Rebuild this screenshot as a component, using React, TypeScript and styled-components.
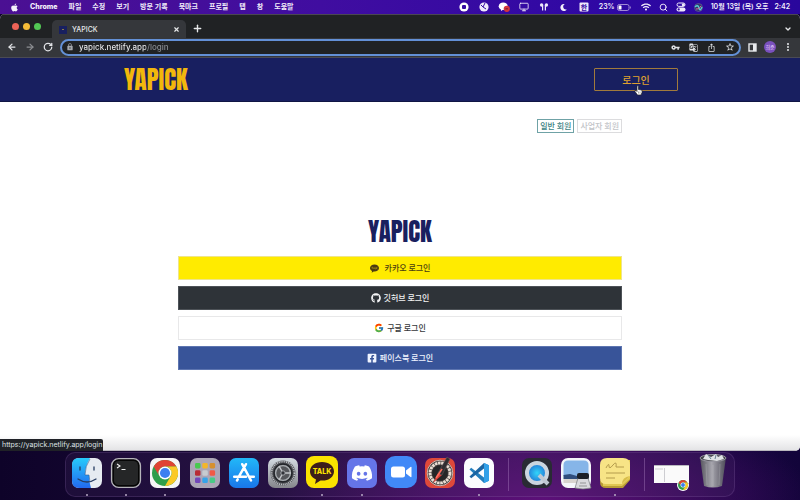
import React from "react";
import styled, { createGlobalStyle } from "styled-components";
import { FaApple, FaDiscord, FaFacebookSquare, FaGithub, FaWifi, FaMoon } from "react-icons/fa";
import { FcGoogle } from "react-icons/fc";
import { MdGTranslate, MdIosShare, MdLock, MdStarBorder, MdVpnKey } from "react-icons/md";
import { ArrowLeft, ArrowRight, ChevronDown, Monitor, MoreVertical, Plus, RotateCw, Search, X } from "lucide-react";

const uiFont = `Inter, "Noto Sans CJK KR", sans-serif`;
const pageFont = `"Noto Sans CJK KR", "Noto Sans", sans-serif`;

const GlobalStyle = createGlobalStyle`
  *, *::before, *::after { box-sizing: border-box; }
  body { margin: 0; font-family: ${uiFont}; }
  button, input, a { font: inherit; color: inherit; }
  button { padding: 0; border: 0; background: none; cursor: pointer; }
  a { text-decoration: none; }
  svg { display: block; flex: none; }
`;

const Desktop = styled.div`
  min-height: 100vh;
  display: flex;
  flex-direction: column;
  background:
    radial-gradient(ellipse 34% 90px at 68% 100%, #5c1078 0%, rgba(92, 16, 120, 0) 100%),
    linear-gradient(90deg, #0e0329 0%, #1c0a38 35%, #330c55 65%, #1a0742 90%, #12043a 100%);
`;

/* System menu bar */

const MenuBar = styled.header`
  height: 14px;
  padding: 0 10px;
  display: flex;
  align-items: center;
  justify-content: space-between;
  background: linear-gradient(90deg, #4b1093 0%, #400da0 40%, #2f08a4 75%, #29079c 100%);
  color: #f3effb;
  font-size: 7px;
  line-height: 14px;
  font-weight: 600;
  white-space: nowrap;
`;

const Menus = styled.nav`
  display: flex;
  align-items: center;
  gap: 11px;
`;

const MenuItem = styled.button<{ $bold?: boolean }>`
  font-weight: ${(p) => (p.$bold ? 800 : 600)};
`;

const StatusIcons = styled.div<{ $gap: number }>`
  display: flex;
  align-items: center;
  gap: ${(p) => p.$gap}px;
`;

const Battery = styled.span`
  display: flex;
  align-items: center;
  gap: 2px;
`;

const Clock = styled.time`
  display: flex;
  gap: 6px;
`;

/* Browser window */

const BrowserWindow = styled.section`
  position: relative;
  flex: 1;
  display: flex;
  flex-direction: column;
  border-radius: 5px 5px 5px 0;
  overflow: hidden;
  background: #fff;
`;

const TabStrip = styled.div`
  height: 24px;
  padding: 5px 8px 0 12px;
  display: flex;
  align-items: flex-start;
  background: #202224;
  border-top: 1px solid #4b4752;
  color: #e6e8ea;
`;

const TrafficLights = styled.div`
  display: flex;
  gap: 4px;
  padding-top: 3px;
  margin-right: 11px;
`;

const Light = styled.button<{ $color: string }>`
  width: 7px;
  height: 7px;
  border-radius: 50%;
  background: ${(p) => p.$color};
`;

const Tab = styled.div`
  width: 134px;
  height: 19px;
  padding: 0 6px 0 7px;
  display: flex;
  align-items: center;
  gap: 5px;
  border-radius: 5px 5px 0 0;
  background: #35373b;
  font-size: 7px;
  font-weight: 500;
`;

const Favicon = styled.span`
  width: 8px;
  height: 8px;
  display: grid;
  place-items: center;
  background: #18205f;

  &::after {
    content: "";
    width: 2px;
    height: 1px;
    background: #8a7a45;
  }
`;

const TabTitle = styled.span`
  flex: 1;
`;

const NewTab = styled.button`
  margin: 3px auto 0 6px;
`;

const TabMenu = styled.button`
  margin-top: 5px;
`;

const Toolbar = styled.div`
  height: 20px;
  padding: 1px 7px 2px;
  display: flex;
  align-items: center;
  gap: 7px;
  background: #35373b;
  border-bottom: 1px solid #4a4b55;
  color: #e2e4e7;
`;

const Navigation = styled.nav`
  display: flex;
  gap: 8px;
`;

const ToolButton = styled.button<{ $dim?: boolean }>`
  opacity: ${(p) => (p.$dim ? 0.5 : 1)};
`;

const AddressBar = styled.label`
  flex: 1;
  height: 17px;
  padding: 0 4px;
  display: flex;
  align-items: center;
  gap: 5px;
  border: 2px solid #6390d6;
  border-radius: 9px;
  background: #202224;
`;

const AddressInput = styled.input`
  flex: 1;
  min-width: 0;
  height: 13px;
  padding: 0;
  border: 0;
  outline: 0;
  font-size: 8px;
  font-weight: 500;
  color: transparent;
  background: linear-gradient(90deg, #f0f1f3 0 67px, #8b8f94 67px);
  background-clip: text;
  -webkit-background-clip: text;
`;

const AddressActions = styled.span`
  display: flex;
  align-items: center;
  gap: 9px;
`;

const Avatar = styled.button`
  width: 12px;
  height: 12px;
  border-radius: 50%;
  background: #7a50bd;
  color: #eadcff;
  font-size: 5px;
  line-height: 12px;
`;

/* Web page */

const SiteHeader = styled.header`
  height: 44px;
  display: flex;
  justify-content: center;
  background: #181f60;
  border-bottom: 1px solid #101544;
`;

const HeaderInner = styled.div`
  width: 70%;
  padding: 0 2px 0 4px;
  display: flex;
  align-items: center;
  justify-content: space-between;
`;

const Wordmark = styled.h1<{ $color: string }>`
  margin: 0;
  color: ${(p) => p.$color};
  font-family: Anton, Impact, "Liberation Sans Narrow", "Liberation Sans", sans-serif;
  font-size: 25px;
  line-height: 30px;
  font-weight: 400;
`;

const LoginLink = styled.a`
  position: relative;
  width: 84px;
  height: 23px;
  border: 1px solid #a17a3c;
  border-radius: 1px;
  color: #dfa02f;
  font-family: ${pageFont};
  font-size: 10px;
  line-height: 22px;
  font-weight: 500;
  text-align: center;
`;

const Pointer = styled.svg`
  position: absolute;
  left: 39px;
  top: 16px;
`;

const Main = styled.main`
  width: 56%;
  align-self: center;
  flex: 1;
  padding: 17px 2px 50px;
  display: flex;
  flex-direction: column;
  font-family: ${pageFont};
`;

const MemberTypes = styled.div`
  display: flex;
  justify-content: flex-end;
  gap: 3px;
`;

const MemberType = styled.button<{ $active?: boolean }>`
  height: 14px;
  padding: 0 2px;
  border: 1px solid ${(p) => (p.$active ? "#6fa2a6" : "#dcdcde")};
  color: ${(p) => (p.$active ? "#3a7f82" : "#c2c4c8")};
  font-size: 8px;
  line-height: 12px;
  font-weight: 500;
`;

const LoginPanel = styled.section`
  padding-top: 84px;
  display: flex;
  flex-direction: column;
  align-items: stretch;
  text-align: center;
`;

const ProviderList = styled.div`
  padding-top: 9px;
  display: grid;
  gap: 6px;
`;

const Provider = styled.button<{ $bg: string; $fg: string; $line: string; $gap?: number }>`
  height: 24px;
  display: flex;
  align-items: center;
  justify-content: center;
  gap: ${(p) => p.$gap ?? 3}px;
  background: ${(p) => p.$bg};
  border: 1px solid ${(p) => p.$line};
  color: ${(p) => p.$fg};
  font-size: 8px;
  line-height: 20px;
  font-weight: 500;
`;

const StatusBubble = styled.div`
  position: absolute;
  left: 0;
  bottom: 0;
  height: 12px;
  padding: 0 1px 0 2px;
  border-radius: 0 2px 0 0;
  background: #202227;
  color: #dfe1e5;
  font-size: 7px;
  line-height: 12px;
`;

const PageShade = styled.div`
  height: 16px;
  background: linear-gradient(#fff, #e4e4e6);
  border-bottom: 1px solid #b9b7bd;
`;

/* Dock */

const DockArea = styled.footer`
  height: 49px;
  padding: 1px 65px 3px;
`;

const Dock = styled.div`
  height: 45px;
  padding: 0 6px;
  display: flex;
  align-items: center;
  justify-content: space-between;
  border: 1px solid rgba(160, 120, 190, 0.2);
  border-radius: 10px;
  background: rgba(80, 50, 110, 0.2);
`;

const DockItem = styled.button<{ $wide?: boolean; $running?: boolean }>`
  width: ${(p) => (p.$wide ? 35 : 30)}px;
  height: 43px;
  display: flex;
  flex-direction: column;
  align-items: center;
  justify-content: flex-end;
  gap: 6px;

  &::after {
    content: "";
    width: 2px;
    height: 2px;
    border-radius: 50%;
    background: ${(p) => (p.$running ? "#b7a9c4" : "transparent")};
  }
`;

const DockRule = styled.span<{ $tight?: boolean }>`
  width: 1px;
  height: 33px;
  margin: 0 ${(p) => (p.$tight ? 0 : 4)}px 0 4px;
  background: rgba(190, 150, 210, 0.35);
`;

const Icon = ({ children, w = 30, h = 30 }: { children: React.ReactNode; w?: number; h?: number }) => (
  <svg width={w} height={h} viewBox={`0 0 ${w} ${h}`} overflow="visible">
    {children}
  </svg>
);

const ChromeMark = ({ r }: { r: number }) => (
  <svg x={15 - r} y={15 - r} width={r * 2} height={r * 2} viewBox="0 0 48 48">
    <circle cx="24" cy="24" r="24" fill="#2f9e4b" />
    <path d="M3.2 12A24 24 0 0 1 44.8 12H24A12 12 0 0 0 13.6 30Z" fill="#df4334" />
    <path d="M44.8 12A24 24 0 0 1 24 48L34.4 30A12 12 0 0 0 24 12Z" fill="#fbc928" />
    <circle cx="24" cy="24" r="12" fill="#fff" />
    <circle cx="24" cy="24" r="9.3" fill="#3d7ff0" />
  </svg>
);

const Finder = () => (
  <Icon>
    <defs>
      <linearGradient id="finderBlue" x1="0" y1="0" x2="0" y2="1">
        <stop stopColor="#27cbfb" /><stop offset="1" stopColor="#2269ef" />
      </linearGradient>
    </defs>
    <rect width="30" height="30" rx="7" fill="#e6ebf1" />
    <path d="M7 0H18Q13 8 13 17H17Q17 24 19 30H7Q0 30 0 23V7Q0 0 7 0Z" fill="url(#finderBlue)" />
    <path d="M8 9V12M22 9V12M6 21Q15 27 24 21" fill="none" stroke="#273c61" strokeWidth="1.3" strokeLinecap="round" />
    <path d="M18 1Q13 8 13 17H17L18 24" fill="none" stroke="#315a91" strokeWidth=".6" />
  </Icon>
);

const Terminal = () => (
  <Icon>
    <rect x=".6" y=".6" width="28.8" height="28.8" rx="7" fill="#050505" stroke="#b6b5bb" strokeWidth="1.4" />
    <rect x="3" y="3" width="24" height="24" rx="4.5" fill="#252627" />
    <path d="M6 6L9 8L6 10M10.5 11.5H14.5" fill="none" stroke="#f1f1f1" strokeWidth="1.1" />
  </Icon>
);

const Chrome = () => (
  <Icon>
    <rect width="30" height="30" rx="7" fill="#f6f5f6" />
    <ChromeMark r={13} />
  </Icon>
);

const Launchpad = () => (
  <Icon>
    <rect width="30" height="30" rx="7" fill="#aca6b6" />
    {["#47c94f", "#f3b62b", "#d6902e", "#b82b34", "#c7cbd0", "#f15945", "#7247b9", "#36a4e9", "#49c986"].map((c, i) => (
      <rect key={c} x={5 + (i % 3) * 7.3} y={5 + Math.floor(i / 3) * 7.3} width="5.5" height="5.5" rx="1.4" fill={c} />
    ))}
  </Icon>
);

const AppStore = () => (
  <Icon>
    <defs>
      <linearGradient id="storeBlue" x1="0" y1="0" x2="0" y2="1">
        <stop stopColor="#22b8f8" /><stop offset="1" stopColor="#1976ea" />
      </linearGradient>
    </defs>
    <rect width="30" height="30" rx="7" fill="url(#storeBlue)" />
    <path d="M13.2 6.2L22 22.5M17 6.2L10 18.3M5.2 18.7H17M20.5 18.7H24.8M8.7 21.3L8 22.5" stroke="#fff" strokeWidth="2.5" strokeLinecap="round" />
  </Icon>
);

const Settings = () => (
  <Icon>
    <defs>
      <linearGradient id="steel" x1="0" y1="0" x2="0" y2="1">
        <stop stopColor="#d4dce2" /><stop offset="1" stopColor="#85868b" />
      </linearGradient>
    </defs>
    <rect width="30" height="30" rx="7" fill="url(#steel)" />
    <circle cx="15" cy="15" r="12.5" fill="#4a4b50" />
    <circle cx="15" cy="15" r="11.5" fill="none" stroke="#bcc0c4" strokeWidth="1.8" strokeDasharray="1.1 .8" />
    <circle cx="15" cy="15" r="9" fill="#55575b" stroke="#222529" strokeWidth="1.4" />
    <circle cx="15" cy="15" r="7.4" fill="none" stroke="#aaaeb2" strokeWidth="1.3" />
    <path d="M15 15H23M15 15L11 8M15 15L11 22" stroke="#c4c7ca" strokeWidth="1.5" />
    <circle cx="15" cy="15" r="2.2" fill="#303238" stroke="#a5a8ac" />
  </Icon>
);

const Talk = () => (
  <Icon w={32} h={32}>
    <rect width="32" height="32" rx="8" fill="#fbe200" />
    <path d="M16 6C9 6 4 10 4 15.4C4 19 6.5 21.8 10 23.4L9 28L14.5 24.5C22 25.3 28 21 28 15.4C28 10 23 6 16 6Z" fill="#3c1d1b" />
    <text x="16" y="18.4" fontSize="7" fontWeight="800" textAnchor="middle" fill="#fbe200" fontFamily="Inter, sans-serif">TALK</text>
  </Icon>
);

const Discord = () => (
  <Icon>
    <rect width="30" height="30" rx="7" fill="#6575e8" />
    <FaDiscord x="4" y="4" width="22" height="22" size={22} color="#fff" />
  </Icon>
);

const Zoom = () => (
  <Icon w={32} h={32}>
    <rect width="32" height="32" rx="10" fill="#4189f7" />
    <rect x="6" y="10.5" width="14" height="11" rx="2.5" fill="#fff" />
    <path d="M21 14.5L25.5 11Q26.5 10.5 26.5 11.5V20.5Q26.5 21.5 25.5 21L21 17.5Z" fill="#fff" />
  </Icon>
);

const DiskTool = () => (
  <Icon>
    <rect width="30" height="30" rx="7" fill="#de493a" />
    <circle cx="15" cy="15" r="12.8" fill="#3b3535" stroke="#c8b9b2" />
    <circle cx="15" cy="15" r="10" fill="none" stroke="#e9ded3" strokeWidth="3" strokeDasharray="2.6 .6" />
    <circle cx="15" cy="15" r="7.6" fill="#252627" />
    <path d="M8 25L13 15L17 17Z" fill="#d93f38" />
    <path d="M13 15L22 -1L25 1L17 17Z" fill="#302e31" stroke="#6c6568" strokeWidth=".5" />
    <path d="M11 20L17 11" stroke="#ff6e5e" strokeWidth="1.6" />
  </Icon>
);

const Code = () => (
  <Icon>
    <rect width="30" height="30" rx="7" fill="#fbfcfe" />
    <path d="M20 5L25 7.2V22.8L20 25L5.5 11.5L7.2 9.8L20 19.6Z" fill="#237ebd" />
    <path d="M20 5V10.4L7.2 20.2L5.5 18.5Z" fill="#1b65a3" />
    <path d="M20 5L25 7.2V22.8L20 25Z" fill="#31a0e8" />
  </Icon>
);

const QuickTime = () => (
  <Icon>
    <defs>
      <radialGradient id="lens"><stop stopColor="#31d5fa" /><stop offset="1" stopColor="#2374d3" /></radialGradient>
    </defs>
    <rect width="30" height="30" rx="7" fill="#292b34" />
    <circle cx="15" cy="15" r="10" fill="url(#lens)" stroke="#cbd5df" strokeWidth="4" />
    <path d="M17 17L26 26" stroke="#c0c9d3" strokeWidth="4" />
  </Icon>
);

const Preview = () => (
  <Icon>
    <rect width="30" height="30" rx="7" fill="#f4f6fa" />
    <path d="M2.5 7Q2.5 2.5 7 2.5H23Q27.5 2.5 27.5 7V18H2.5Z" fill="#86b5e8" />
    <path d="M2.5 17L9 16L16 18H27.5V21H2.5Z" fill="#304d7c" />
    <path d="M2.5 21H27.5V25H2.5Z" fill="#d8d4cf" />
    <path d="M17 20H27L30 30Q22 32 14 30Z" fill="#d9dadd" stroke="#74777c" strokeWidth=".7" />
    <rect x="16" y="15" width="12" height="6" rx="2" fill="#1c2027" />
    <path d="M19 25H25M18 28H26" stroke="#777" strokeWidth=".7" />
  </Icon>
);

const Notes = () => (
  <Icon>
    <path d="M5 4H30V22L23 30H6Q0 30 0 24Z" fill="#b99c35" />
    <path d="M3 2H30V21L22 28H3Z" fill="#e0c752" />
    <path d="M7 0H23Q30 0 30 7V18L22 26H6Q0 26 0 20V7Q0 0 7 0Z" fill="#f7e486" />
    <path d="M22 26Q22 19 30 18Z" fill="#d8bd49" />
    <path d="M6 10Q9 4 9 8T13 7T16 9L24 9M6 15H25M6 20H15" stroke="#b49c4d" fill="none" />
  </Icon>
);

const Thumbnail = () => (
  <Icon w={35} h={30}>
    <rect y="7" width="35" height="18" fill="#fafafa" />
    <rect y="7" width="35" height="1" fill="#babac0" />
    <path d="M10.5 10V24M1 11H9" stroke="#cdcdd1" />
    <g transform="translate(14 12)">
      <circle cx="15" cy="15" r="6" fill="#fff" />
      <ChromeMark r={5} />
    </g>
  </Icon>
);

const Trash = () => (
  <Icon h={34}>
    <defs>
      <linearGradient id="can"><stop stopColor="#55545d" /><stop offset=".45" stopColor="#a6a5ad" /><stop offset="1" stopColor="#4d4b58" /></linearGradient>
    </defs>
    <path d="M2 3H28L24 32Q15 35 6 32Z" fill="url(#can)" />
    <ellipse cx="15" cy="4" rx="13" ry="3.5" fill="#45454c" stroke="#9796a0" />
    <path d="M5 5L8 0L13 3L18 0L20 3L24 1L26 5L19 7L10 6Z" fill="#e1e4e6" />
    <path d="M10 1L13 5M18 1L17 5" stroke="#667f91" />
    <path d="M8 10L9 31M15 11V32M22 10L21 31" stroke="#ddd" strokeWidth=".5" opacity=".4" />
  </Icon>
);

const KakaoMark = () => (
  <svg width="9" height="9" viewBox="0 0 18 18">
    <path d="M9 1C4 1 0 4.2 0 8C0 10.5 1.7 12.7 4.2 14L3.3 17.5L7.4 14.9C13 15.6 18 12.4 18 8C18 4.2 14 1 9 1Z" fill="#4b3a12" />
    <path d="M3 6.5H6M4.5 6.5V10M7 10L8 7L9 10M10.5 6.5V10H12M13 6.5V10M15 6.5L13 8.3L15 10" stroke="#bda70e" fill="none" />
  </svg>
);

const statusGlyphs: [string, React.ReactNode][] = [
  ["record", <Icon w={10} h={10}><circle cx="5" cy="5" r="4.6" fill="#fff" /><rect x="3" y="3" width="4" height="4" rx="1" fill="#3509a2" /></Icon>],
  ["timer", <Icon w={10} h={10}><circle cx="5" cy="5" r="4.6" fill="#eee9fb" /><path d="M6 1L4 5L7 7M4 5L2 3" stroke="#3509a2" fill="none" /></Icon>],
  ["chat", <Icon w={10} h={10}><ellipse cx="4.2" cy="4.3" rx="4.5" ry="3.8" fill="#fff" /><path d="M2 7V9L5 7" fill="#fff" /><circle cx="7.8" cy="6.8" r="3.1" fill="#d3363d" /><path d="M6.5 6.8H9" stroke="#702033" /></Icon>],
  ["display", <Monitor size={10} />],
  ["airpods", <Icon w={10} h={10}><circle cx="2.6" cy="3" r="1.7" fill="#eee9fb" /><circle cx="7.4" cy="3" r="1.7" fill="#eee9fb" /><path d="M3.6 3V8.5M6.4 3V8.5" stroke="#eee9fb" strokeWidth="1.2" /></Icon>],
  ["focus", <FaMoon size={7} />],
  ["input", <Icon w={10} h={10}><rect x=".5" y=".5" width="9" height="9" rx="1" fill="#eee9fb" /><text x="5" y="7.7" fontSize="7" textAnchor="middle" fill="#3509a2" fontFamily="Noto Sans CJK KR">한</text></Icon>],
];

const GlyphSlot = styled.span`
  width: 10px;
  display: flex;
  justify-content: center;
`;

const menus = ["파일", "수정", "보기", "방문 기록", "북마크", "프로필", "탭", "창", "도움말"];

export default function App() {
  return (
    <Desktop>
      <GlobalStyle />
      <MenuBar>
        <Menus>
          <MenuItem aria-label="Apple"><FaApple size={9} /></MenuItem>
          <MenuItem $bold>Chrome</MenuItem>
          {menus.map((m) => <MenuItem key={m}>{m}</MenuItem>)}
        </Menus>
        <StatusIcons $gap={10}>
          {statusGlyphs.map(([name, glyph]) => <GlyphSlot key={name}>{glyph}</GlyphSlot>)}
          <Battery>
            23%
            <Icon w={14} h={7}>
              <rect x=".5" y=".5" width="11.5" height="6" rx="1.8" fill="none" stroke="#a18ad5" />
              <rect x="1.5" y="1.5" width="3" height="4" rx=".6" fill="#fff" />
              <path d="M13.3 2.5V4.5" stroke="#a18ad5" />
            </Icon>
          </Battery>
          <StatusIcons $gap={8}>
            <FaWifi size={10} />
            <Search size={9} strokeWidth={2.5} />
            <Icon w={10} h={10}>
              <rect x="1" y="1" width="8" height="3.4" rx="1.7" fill="none" stroke="#eee9fb" />
              <rect x=".5" y="5.4" width="9" height="4" rx="2" fill="#eee9fb" />
              <circle cx="7.3" cy="2.7" r="1.5" fill="#eee9fb" /><circle cx="2.7" cy="7.4" r="1.1" fill="#3509a2" />
            </Icon>
            <Icon w={9} h={9}>
              <circle cx="4.5" cy="4.5" r="4" fill="#32336d" stroke="#6c6d9c" strokeWidth=".6" />
              <path d="M1 4Q4 1 5 5T8 4" stroke="#55cbd1" strokeWidth="1.4" fill="none" />
              <path d="M2 6Q5 7 7 3" stroke="#da6b9c" fill="none" />
            </Icon>
            <Clock><span>10월 13일 (목) 오후</span><span>2:42</span></Clock>
          </StatusIcons>
        </StatusIcons>
      </MenuBar>

      <BrowserWindow>
        <TabStrip>
          <TrafficLights>
            <Light $color="#ec6357" aria-label="닫기" />
            <Light $color="#f4bb37" aria-label="최소화" />
            <Light $color="#52c754" aria-label="확대" />
          </TrafficLights>
          <Tab>
            <Favicon />
            <TabTitle>YAPICK</TabTitle>
            <ToolButton aria-label="탭 닫기"><X size={7} strokeWidth={4} /></ToolButton>
          </Tab>
          <NewTab aria-label="새 탭"><Plus size={11} strokeWidth={3} /></NewTab>
          <TabMenu aria-label="탭 검색"><ChevronDown size={8} strokeWidth={4} /></TabMenu>
        </TabStrip>
        <Toolbar>
          <Navigation>
            <ToolButton aria-label="뒤로"><ArrowLeft size={10} strokeWidth={3} /></ToolButton>
            <ToolButton aria-label="앞으로" $dim><ArrowRight size={10} strokeWidth={3} /></ToolButton>
            <ToolButton aria-label="새로고침"><RotateCw size={10} strokeWidth={3} /></ToolButton>
          </Navigation>
          <AddressBar aria-label="주소">
            <MdLock size={8} color="#a6a9ae" />
            <AddressInput aria-label="주소" defaultValue="yapick.netlify.app/login" spellCheck={false} />
            <AddressActions>
              <MdVpnKey size={9} />
              <MdGTranslate size={9} />
              <MdIosShare size={9} />
              <MdStarBorder size={10} />
            </AddressActions>
          </AddressBar>
          <ToolButton aria-label="사이드 패널">
            <Icon w={9} h={9}>
              <rect x="1" y="1" width="7" height="7" fill="none" stroke="#e8eaed" strokeWidth="1.4" />
              <rect x="5" y="1" width="3" height="7" fill="#e8eaed" />
            </Icon>
          </ToolButton>
          <Avatar>희준</Avatar>
          <ToolButton aria-label="메뉴"><MoreVertical size={10} strokeWidth={3} /></ToolButton>
        </Toolbar>

        <SiteHeader>
          <HeaderInner>
            <Wordmark $color="#f2b70c">YAPICK</Wordmark>
            <LoginLink href="https://yapick.netlify.app/login">
              로그인
              <Pointer width="9" height="11" viewBox="0 0 18 22">
                <path d="M6 2Q8 0 9 3V9L15 10Q17 11 16 15L14 20H7L2 13Q1 10 4 11L6 13Z" fill="#fff" stroke="#22232b" strokeWidth="1.4" />
                <path d="M9 13V17M12 13V17" stroke="#555" />
              </Pointer>
            </LoginLink>
          </HeaderInner>
        </SiteHeader>
        <Main>
          <MemberTypes>
            <MemberType $active>일반 회원</MemberType>
            <MemberType>사업자 회원</MemberType>
          </MemberTypes>
          <LoginPanel>
            <Wordmark as="h2" $color="#19205f">YAPICK</Wordmark>
            <ProviderList>
              <Provider $bg="#ffeb00" $fg="#4a3b10" $line="#efe58a" $gap={6}><KakaoMark />카카오 로그인</Provider>
              <Provider $bg="#2e3338" $fg="#f2f3f4" $line="#4d5257"><FaGithub size={10} />깃허브 로그인</Provider>
              <Provider $bg="#ffffff" $fg="#35373a" $line="#e8e8e9"><FcGoogle size={10} />구글 로그인</Provider>
              <Provider $bg="#385499" $fg="#f0f4ff" $line="#5d75b0"><FaFacebookSquare size={10} />페이스북 로그인</Provider>
            </ProviderList>
          </LoginPanel>
        </Main>
        <PageShade />
        <StatusBubble>https://yapick.netlify.app/login</StatusBubble>
      </BrowserWindow>

      <DockArea>
        <Dock>
          <DockItem aria-label="Finder" $running><Finder /></DockItem>
          <DockItem aria-label="Terminal" $running><Terminal /></DockItem>
          <DockItem aria-label="Chrome" $running><Chrome /></DockItem>
          <DockItem aria-label="Launchpad"><Launchpad /></DockItem>
          <DockItem aria-label="App Store"><AppStore /></DockItem>
          <DockItem aria-label="시스템 설정"><Settings /></DockItem>
          <DockItem aria-label="KakaoTalk" $running><Talk /></DockItem>
          <DockItem aria-label="Discord" $running><Discord /></DockItem>
          <DockItem aria-label="Zoom"><Zoom /></DockItem>
          <DockItem aria-label="디스크 정리"><DiskTool /></DockItem>
          <DockItem aria-label="Visual Studio Code" $running><Code /></DockItem>
          <DockRule />
          <DockItem aria-label="QuickTime"><QuickTime /></DockItem>
          <DockItem aria-label="미리보기"><Preview /></DockItem>
          <DockItem aria-label="스티커" $running><Notes /></DockItem>
          <DockRule $tight />
          <DockItem aria-label="Chrome 윈도우" $wide><Thumbnail /></DockItem>
          <DockItem aria-label="휴지통"><Trash /></DockItem>
        </Dock>
      </DockArea>
    </Desktop>
  );
}
